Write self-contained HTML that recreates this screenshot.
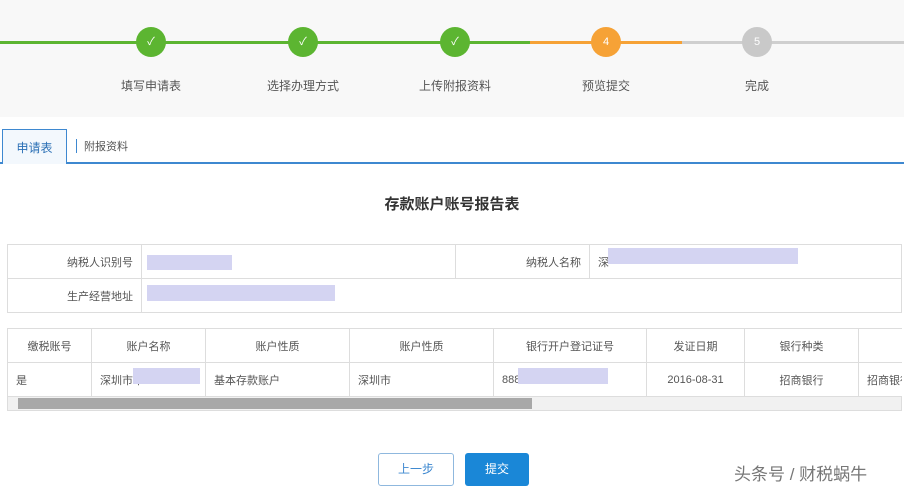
<!DOCTYPE html><html><head><meta charset="utf-8"><style>
body{margin:0;width:904px;height:489px;overflow:hidden;background:#fff;font-family:"Liberation Sans","Noto Sans CJK SC",sans-serif;font-size:12px;color:#555;position:relative}
.a{position:absolute}
.c{position:absolute;width:30px;height:30px;border-radius:50%;color:#fff;text-align:center;line-height:30px;font-size:11px}
.lb{position:absolute;top:77px;width:120px;text-align:center;font-size:12px;color:#555}
table{border-collapse:collapse;position:absolute;font-size:11px;color:#555;table-layout:fixed}
td{border:1px solid #ddd;height:33px;padding:0 8px;white-space:nowrap;overflow:hidden}
.blur{position:absolute;background:#d4d4f2}
</style></head><body>
<div class="a" style="left:0;top:0;width:904px;height:117px;background:#f8f8f8"></div>
<div class="a" style="left:0;top:41px;width:530px;height:3px;background:#5cb531"></div>
<div class="a" style="left:530px;top:41px;width:152px;height:3px;background:#f6a236"></div>
<div class="a" style="left:682px;top:41px;width:222px;height:3px;background:#cfcfcf"></div>
<div class="c" style="left:136px;top:27px;background:#5cb531">✓</div>
<div class="c" style="left:288px;top:27px;background:#5cb531">✓</div>
<div class="c" style="left:440px;top:27px;background:#5cb531">✓</div>
<div class="c" style="left:591px;top:27px;background:#f6a236">4</div>
<div class="c" style="left:742px;top:27px;background:#c9c9c9">5</div>
<div class="lb" style="left:91px">填写申请表</div>
<div class="lb" style="left:243px">选择办理方式</div>
<div class="lb" style="left:395px">上传附报资料</div>
<div class="lb" style="left:546px">预览提交</div>
<div class="lb" style="left:697px">完成</div>
<div class="a" style="left:0;top:162px;width:904px;height:2px;background:#3e88d0"></div>
<div class="a" style="left:2px;top:129px;width:63px;height:34px;background:#f3f8fd;border:1px solid #3e88d0;border-bottom:none;color:#2a6fb5;text-align:center;line-height:36px;font-size:12px">申请表</div>
<div class="a" style="left:76px;top:139px;width:1px;height:14px;background:#3e88d0"></div>
<div class="a" style="left:84px;top:138px;font-size:11px;color:#555">附报资料</div>
<div class="a" style="left:0;top:193px;width:904px;text-align:center;font-size:15px;font-weight:bold;color:#333">存款账户账号报告表</div>
<table style="left:7px;top:244px;width:895px">
<tr><td style="width:117px;text-align:right">纳税人识别号</td><td style="width:297px"></td><td style="width:117px;text-align:right">纳税人名称</td><td>深</td></tr>
<tr><td style="text-align:right">生产经营地址</td><td colspan="3"></td></tr></table>
<div class="blur" style="left:147px;top:255px;width:85px;height:15px"></div>
<div class="blur" style="left:608px;top:248px;width:190px;height:16px"></div>
<div class="blur" style="left:147px;top:285px;width:188px;height:16px"></div>
<table style="left:7px;top:328px;width:930px">
<tr style="text-align:center"><td style="width:67px">缴税账号</td><td style="width:97px">账户名称</td><td style="width:127px">账户性质</td><td style="width:127px">账户性质</td><td style="width:136px">银行开户登记证号</td><td style="width:81px">发证日期</td><td style="width:97px">银行种类</td><td></td></tr>
<tr><td>是</td><td>深圳市华</td><td>基本存款账户</td><td>深圳市</td><td>888</td><td style="text-align:center">2016-08-31</td><td style="text-align:center">招商银行</td><td>招商银行</td></tr></table>
<div class="a" style="left:902px;top:320px;width:2px;height:100px;background:#fff"></div>
<div class="blur" style="left:133px;top:368px;width:67px;height:16px"></div>
<div class="blur" style="left:518px;top:368px;width:90px;height:16px"></div>
<div class="a" style="left:7px;top:396px;width:895px;height:15px;background:#f1f1f1;border:1px solid #ddd;box-sizing:border-box"></div>
<div class="a" style="left:18px;top:398px;width:514px;height:11px;background:#a8a8a8"></div>
<div class="a" style="left:378px;top:453px;width:74px;height:31px;border:1px solid #8fb8de;border-radius:3px;color:#3e88d0;text-align:center;line-height:31px;font-size:12px">上一步</div>
<div class="a" style="left:465px;top:453px;width:64px;height:33px;background:#1a87d7;border-radius:3px;color:#fff;text-align:center;line-height:33px;font-size:12px">提交</div>
<div class="a" style="left:734px;top:460px;font-size:17px;color:#777">头条号 / 财税蜗牛</div>
</body></html>
